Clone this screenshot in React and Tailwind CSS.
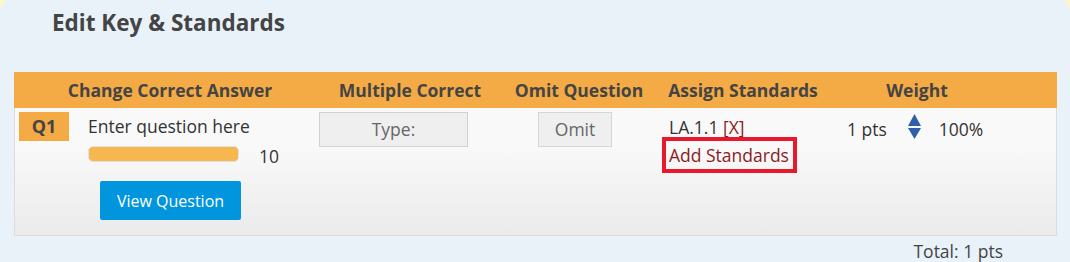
import React from 'react';

const headers = [
  { label: 'Change Correct Answer', w: 'w-[312px]' },
  { label: 'Multiple Correct', w: 'w-[168px]' },
  { label: 'Omit Question', w: 'w-[170px]' },
  { label: 'Assign Standards', w: 'w-[158px]' },
  { label: 'Weight', w: 'w-[190px]' },
];

const SortArrows = () => (
  <svg width="13" height="25" viewBox="0 0 13 25" className="block">
    <polygon points="6.5,0 13,12 0,12" fill="#2f5fa7" />
    <polygon points="0,14 13,14 6.5,25" fill="#2f5fa7" />
  </svg>
);

export default function App() {
  return (
    <div className="w-[1070px] h-[262px] overflow-hidden bg-[#fdf6c6]" style={{ fontFamily: '"Open Sans", "Liberation Sans", sans-serif' }}>
      <div className="-mt-[3px] h-[265px] bg-[#e9f1f9] rounded-t-[16px] pt-[3px] text-[#444]">
        {/* Title */}
        <h1 className="pl-[52px] pt-[8px] text-[22.5px] leading-[30px] font-bold text-[#444]">
          Edit Key &amp; Standards
        </h1>

        {/* Table */}
        <div className="mt-[34px] ml-[14px] w-[1043px]">
          <div className="flex h-[36px] items-center bg-[#f4ab45] text-[17.5px] font-bold text-[#444]">
            {headers.map((h) => (
              <div key={h.label} className={`${h.w} text-center`}>{h.label}</div>
            ))}
          </div>

          <div className="h-[128px] border border-t-0 border-[#dcdcdc] bg-linear-to-b from-[#f9f9f9] from-30% to-[#ebebeb] flex items-start pt-[4px] text-[17.5px]">
            {/* Q1 badge */}
            <div className="ml-[4px] w-[50px] h-[29px] bg-[#f4ab45] flex items-center justify-center font-bold text-[18px] text-[#444]">
              Q1
            </div>

            {/* Question */}
            <div className="ml-[19px] w-[231px] flex flex-col">
              <div className="leading-[24px] mt-[2px] text-[#333]">Enter question here</div>
              <div className="flex items-start mt-[8px]">
                <div className="w-[151px] h-[16px] rounded-[5px] border border-[#e2e2e2] bg-[#f6b74f]" />
                <span className="ml-[20px] text-[#333] leading-[16px] mt-[2px]">10</span>
              </div>
              <button className="ml-[12px] mt-[17px] w-[141px] h-[39px] bg-[#0095dd] text-white text-[16px] rounded-[2px]">
                View Question
              </button>
            </div>

            {/* Multiple correct */}
            <div className="w-[149px] h-[35px] border border-[#d2d2d2] bg-[#efefef] flex items-center justify-center text-[#666]">
              Type:
            </div>

            {/* Omit */}
            <div className="ml-[70px] w-[74px] h-[35px] border border-[#d6d6d6] bg-[#efefef] flex items-center justify-center text-[#666]">
              Omit
            </div>

            {/* Standards */}
            <div className="ml-[50px] w-[135px] flex flex-col">
              <div className="pl-[7px] leading-[24px] mt-[3px] text-[#333]">
                LA.1.1 <span className="text-[#8b1c1c]">[X]</span>
              </div>
              <div className="-mt-[2px] h-[36px] border-[4px] border-[#e8192c] pl-[3px] flex items-center text-[#8b1c1c]">
                Add Standards
              </div>
            </div>

            {/* Weight */}
            <div className="ml-[50px] flex items-start">
              <span className="leading-[24px] mt-[5px] text-[#333]">1 pts</span>
              <div className="ml-[21px] mt-[2px]"><SortArrows /></div>
              <span className="ml-[18px] leading-[24px] mt-[5px] text-[#333]">100%</span>
            </div>
          </div>

          <div className="flex justify-end pr-[54px] pt-[3px] text-[17.5px] leading-[24px] text-[#444]">
            Total: 1 pts
          </div>
        </div>
      </div>
    </div>
  );
}
